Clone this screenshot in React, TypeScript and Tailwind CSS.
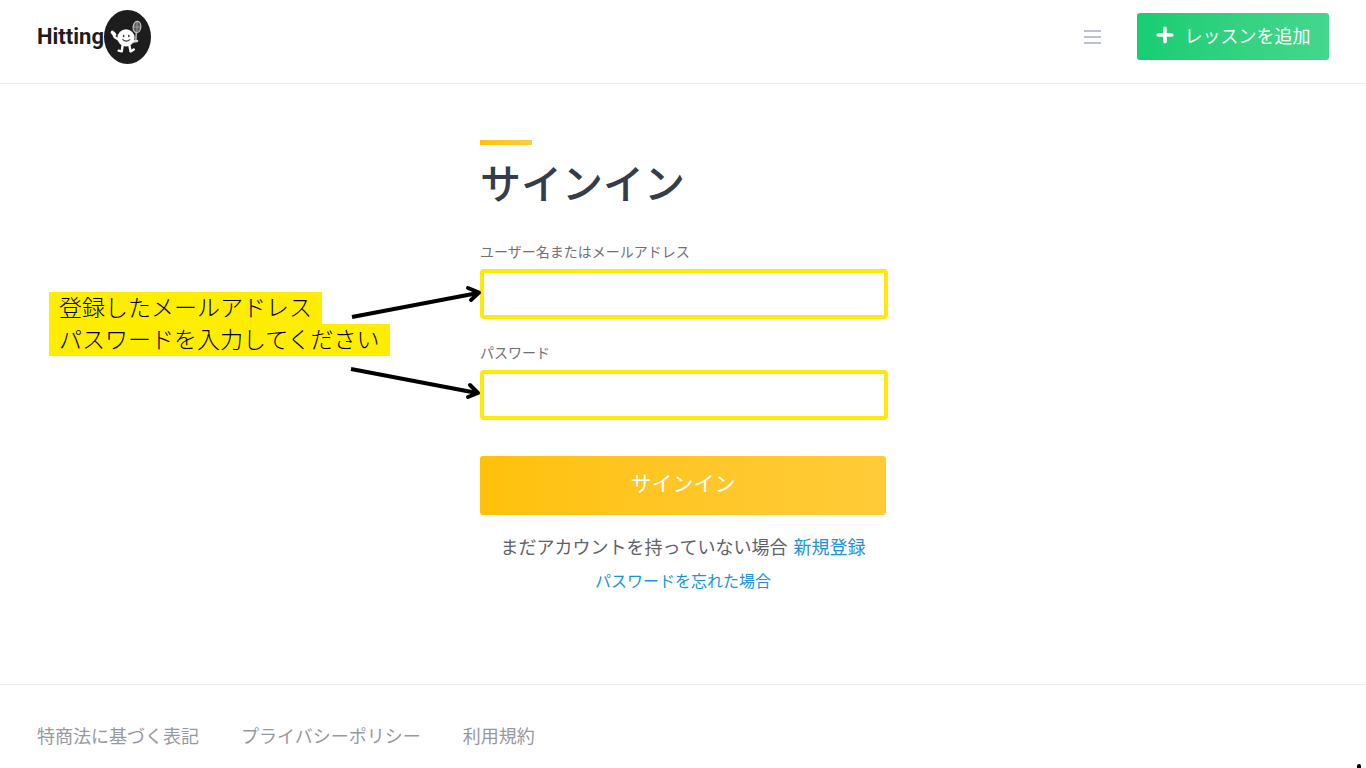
import React from "react";

const footerLinks = ["特商法に基づく表記", "プライバシーポリシー", "利用規約"];

function LogoMark() {
  return (
    <svg width="48" height="54" viewBox="0 0 48 54" fill="none" aria-hidden="true">
      <ellipse cx="23.5" cy="27" rx="23.5" ry="27" fill="#1d1d1d" />
      {/* racket */}
      <ellipse cx="33" cy="17" rx="3.8" ry="5.6" fill="#5c5c5c" stroke="#c4c4c4" strokeWidth="1.3" transform="rotate(8 33 17)" />
      <path d="M33 12v10M30 17h6" stroke="#a8a8a8" strokeWidth="0.8" />
      <path d="M32.4 22.5L31.6 32" stroke="#b5b5b5" strokeWidth="1.6" />
      {/* arms and legs */}
      <path d="M15 30L10.5 27L8.8 22.5" stroke="#fff" strokeWidth="2.2" strokeLinecap="round" strokeLinejoin="round" />
      <path d="M8.4 22.5L10.6 24.5" stroke="#fff" strokeWidth="3.6" strokeLinecap="round" />
      <path d="M29 31.5L33 31" stroke="#ddd" strokeWidth="2.6" strokeLinecap="round" />
      <path d="M18.5 36L17.8 41.4L14.6 40.6M25.5 36L26.6 41.4L29.8 39.4" stroke="#fff" strokeWidth="2.4" strokeLinecap="round" strokeLinejoin="round" />
      <circle cx="22" cy="27.8" r="8.6" fill="#fff" />
      <ellipse cx="19.6" cy="26" rx="0.8" ry="1.2" fill="#333" />
      <ellipse cx="24.8" cy="26" rx="0.8" ry="1.2" fill="#333" />
      <path d="M18.8 29.6Q22.3 32.6 25.8 29.6" stroke="#333" strokeWidth="1.2" strokeLinecap="round" />
    </svg>
  );
}

function SiteHeader() {
  return (
    <header className="flex h-[84px] items-start justify-between border-b border-[#ebebee] px-[37px]">
      <a href="#" className="mt-[10px] flex items-center text-[#1d1d1d]">
        <span className="font-[Roboto,sans-serif] text-[22px] leading-7 font-bold">
          Hitting
        </span>
        <LogoMark />
      </a>

      <div className="mt-[13px] flex items-center gap-9">
        <button type="button" aria-label="メニュー" className="flex w-[17px] flex-col gap-1">
          <span className="h-[2px] bg-[#bcc0d0]" />
          <span className="h-[2px] bg-[#bcc0d0]" />
          <span className="h-[2px] bg-[#bcc0d0]" />
        </button>
        <button
          type="button"
          className="flex h-[47px] w-[192px] items-center justify-center gap-[11px] rounded-[3px] bg-linear-to-r from-[#15cd72] to-[#44d78d] pb-[3px] text-[18px] text-white"
        >
          <svg width="18" height="18" viewBox="0 0 18 18" aria-hidden="true">
            <path d="M9 2.2v13.6M2.2 9h13.6" stroke="#fff" strokeWidth="3.6" strokeLinecap="round" />
          </svg>
          レッスンを追加
        </button>
      </div>
    </header>
  );
}

interface SignInFieldProps {
  id: string;
  label: string;
  type: string;
}

function SignInField({ id, label, type }: SignInFieldProps) {
  return (
    <div className="flex flex-col gap-2">
      <label htmlFor={id} className="text-[14px] leading-5 text-[#707075]">
        {label}
      </label>
      <input
        id={id}
        type={type}
        className="h-[50px] w-[408px] rounded-[4px] border-4 border-[#fee90b] bg-white px-3 text-[18px] outline-none"
      />
    </div>
  );
}

// Handwritten hint and its two arrows, floating beside the form
function InputHint() {
  return (
    <>
      <p className="absolute top-[152px] -left-[431px] flex flex-col items-start text-[23px] leading-7 font-light whitespace-nowrap text-black">
        <span className="bg-[#ffed00] px-[10px] pb-1">登録したメールアドレス</span>
        <span className="bg-[#ffed00] px-[10px] pb-1">パスワードを入力してください</span>
      </p>
      <svg
        className="absolute top-[144px] -left-[130px]"
        width="132"
        height="118"
        viewBox="0 0 132 118"
        fill="none"
        stroke="#000"
        strokeWidth="4"
        aria-hidden="true"
      >
        <path d="M2 33L128 9" />
        <path d="M118 4L129 8.5L121 16" strokeLinecap="round" strokeLinejoin="round" />
        <path d="M1 85L127 109" />
        <path d="M120 101L128 109L118 113" strokeLinecap="round" strokeLinejoin="round" />
      </svg>
    </>
  );
}

function SignInForm() {
  return (
    <form className="relative mx-auto w-[406px]" onSubmit={(event) => event.preventDefault()}>
      <div className="h-[5px] w-[52px] bg-linear-to-r from-[#ffc107] to-[#ffcd39]" />
      <h1 className="mt-3 text-[41px] leading-[48px] font-medium text-[#353c4a]">
        サインイン
      </h1>

      <div className="mt-9 flex flex-col gap-[23px]">
        <SignInField id="username" label="ユーザー名またはメールアドレス" type="text" />
        <SignInField id="password" label="パスワード" type="password" />
      </div>

      <button
        type="submit"
        className="mt-9 h-[59px] w-full rounded-[3px] bg-linear-to-r from-[#ffc107] to-[#ffcb37] pb-[6px] text-[21px] text-white"
      >
        サインイン
      </button>

      <div className="mt-[17px] flex flex-col items-center gap-2">
        <p className="flex gap-[6px] text-[18px] leading-7 whitespace-nowrap text-[#5f6169]">
          まだアカウントを持っていない場合
          <a href="#" className="text-[#1c93d8]">
            新規登録
          </a>
        </p>
        <a href="#" className="text-[16px] leading-6 text-[#1c93d8]">
          パスワードを忘れた場合
        </a>
      </div>

      <InputHint />
    </form>
  );
}

function SiteFooter() {
  return (
    <footer className="border-t border-[#ebebee] px-[37px] pt-9 pb-[19px]">
      <nav className="flex gap-[42px] text-[18px] leading-7 text-[#97989f]">
        {footerLinks.map((linkText) => (
          <a key={linkText} href="#">
            {linkText}
          </a>
        ))}
      </nav>
    </footer>
  );
}

export default function App() {
  return (
    <div
      lang="ja"
      className="relative overflow-hidden bg-white font-['Noto_Sans_CJK_JP',sans-serif]"
    >
      <SiteHeader />
      <main className="pt-14 pb-[92px]">
        <SignInForm />
      </main>
      <SiteFooter />
      <span className="absolute right-[5px] bottom-0 h-1 w-1 rounded-t-[2px] bg-black" />
    </div>
  );
}
